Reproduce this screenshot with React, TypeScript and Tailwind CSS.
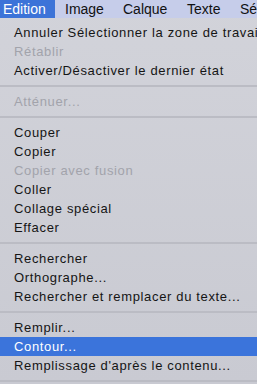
import React from "react";

type Item = { label: string; disabled?: boolean; active?: boolean } | "sep";

const items: Item[] = [
  { label: "Annuler Sélectionner la zone de travail" },
  { label: "Rétablir", disabled: true },
  { label: "Activer/Désactiver le dernier état" },
  "sep",
  { label: "Atténuer...", disabled: true },
  "sep",
  { label: "Couper" },
  { label: "Copier" },
  { label: "Copier avec fusion", disabled: true },
  { label: "Coller" },
  { label: "Collage spécial" },
  { label: "Effacer" },
  "sep",
  { label: "Rechercher" },
  { label: "Orthographe..." },
  { label: "Rechercher et remplacer du texte..." },
  "sep",
  { label: "Remplir..." },
  { label: "Contour...", active: true },
  { label: "Remplissage d'après le contenu..." },
  "sep",
];

export default function App() {
  return (
    <div
      className="w-[257px] h-[384px] overflow-hidden flex flex-col bg-gradient-to-b from-[#d2d3da] to-[#c9cad2]"
      style={{ fontFamily: '"Liberation Sans", Arial, sans-serif' }}
    >
      <div className="h-[18px] shrink-0 flex items-center bg-[#c6cdea] text-[14px] text-[#111] whitespace-nowrap">
        <div className="w-[55px] shrink-0 h-full flex items-center pl-[3px] bg-[#3c73d8] text-white">Edition</div>
        <div className="w-[58px] shrink-0 pl-[10px]">Image</div>
        <div className="w-[64px] shrink-0 pl-[10px]">Calque</div>
        <div className="w-[53px] shrink-0 pl-[10px]">Texte</div>
        <div className="shrink-0 pl-[10px]">Sélection</div>
      </div>
      <div className="pt-[5px] flex flex-col text-[13px] tracking-[0.65px] whitespace-nowrap">
        {items.map((it, i) =>
          it === "sep" ? (
            <div key={i} className="h-[12px] flex items-center">
              <div className="h-[2px] w-full bg-[#bbbcc4]" />
            </div>
          ) : (
            <div
              key={i}
              className={
                "h-[19px] flex items-center pl-[14px] " +
                (it.active
                  ? "bg-[#3b74db] text-white"
                  : it.disabled
                  ? "text-[#a2a3ab]"
                  : "text-[#151515]")
              }
            >
              {it.label}
            </div>
          )
        )}
      </div>
    </div>
  );
}
